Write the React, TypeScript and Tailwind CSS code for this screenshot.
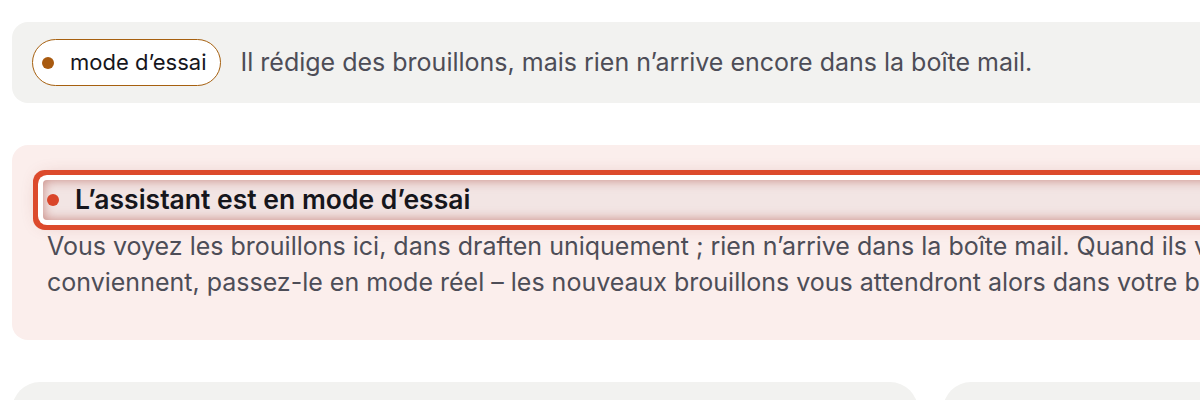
export default function App() {
  return (
    <div className="w-[1200px] h-[400px] overflow-hidden bg-white font-['Inter','Noto_Sans',sans-serif]">
      <div className="w-[1600px] px-3 pt-[22px] flex flex-col gap-[42px]">
        {/* Status strip */}
        <div className="flex items-center gap-[20px] rounded-2xl bg-[#f2f2f0] pl-5 py-[17px]">
          <div className="flex items-center gap-[16px] h-[47px] rounded-full border-[1.5px] border-[#a6600f] bg-white pl-[9px] pr-[13px]">
            <span className="w-[12px] h-[12px] rounded-full bg-[#a85a10]" />
            <span className="text-[22px] text-[#16161c]">mode d’essai</span>
          </div>
          <p className="text-[25px] text-[#4d4d57]">
            Il rédige des brouillons, mais rien n’arrive encore dans la boîte mail.
          </p>
        </div>

        {/* Test mode notice */}
        <div className="rounded-2xl bg-[#fbeeec] pl-[31px] pt-[35px] pb-[40px]">
          <div className="flex items-center gap-[16px] h-[40px] rounded-[4px] bg-[#f2e5e4] pl-1 ring-[5px] ring-[#dc4a2c] ring-offset-[5px] ring-offset-white inset-shadow-[0_0_12px_rgba(170,70,60,0.6)] shadow-[0_0_20px_rgba(150,60,50,0.45)]">
            <span className="w-[12px] h-[12px] rounded-full bg-[#d9452a]" />
            <h2 className="text-[26.5px] font-semibold text-[#16161c]">L’assistant est en mode d’essai</h2>
          </div>
          <p className="mt-[8px] ml-[4px] text-[25px] leading-9 text-[#4d4d57]">
            Vous voyez les brouillons ici, dans draften uniquement ; rien n’arrive dans la boîte mail. Quand ils vous
            <br />
            conviennent, passez-le en mode réel – les nouveaux brouillons vous attendront alors dans votre boîte mail.
          </p>
        </div>

        {/* Lower cards */}
        <div className="flex gap-[25px]">
          <div className="w-[906px] h-[160px] rounded-[28px] bg-[#f2f2f0]" />
          <div className="flex-1 h-[160px] rounded-[28px] bg-[#f2f2f0]" />
        </div>
      </div>
    </div>
  )
}
